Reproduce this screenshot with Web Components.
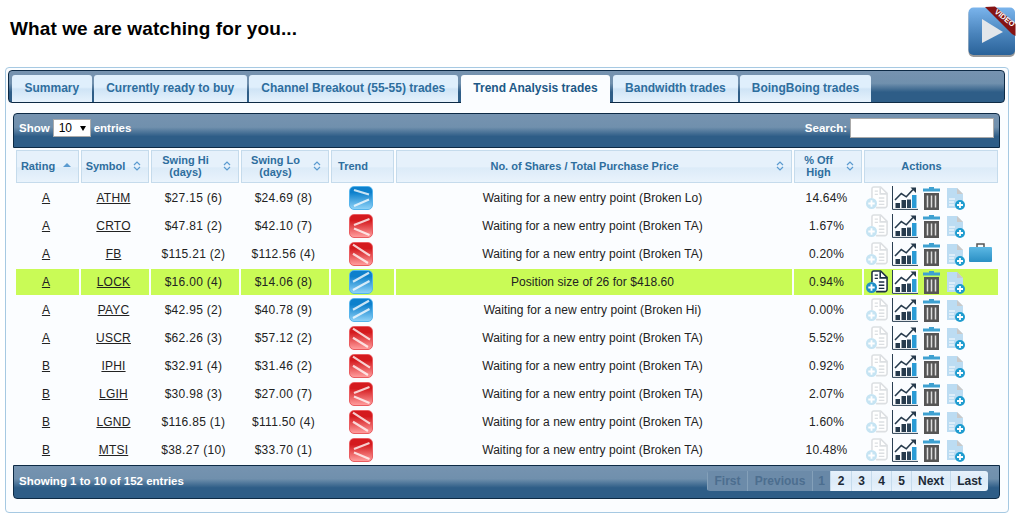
<!DOCTYPE html>
<html>
<head>
<meta charset="utf-8">
<title>What we are watching for you</title>
<style>
  html, body { margin: 0; padding: 0; background: #fff; }
  body { width: 1018px; height: 521px; overflow: hidden; font-family: "Liberation Sans", Arial, sans-serif; }
</style>
</head>
<body>
<watch-page></watch-page>

<script>
// small icons used in the action column
const ICONS = {
  doc: `<svg width="22" height="24" viewBox="0 0 24 26">
    <path d="M6.5 13V3a2 2 0 0 1 2-2h7.500l7 7v13a2.500 2.500 0 0 1-2.500 2.500H11" fill="#fff" stroke="var(--doc)" stroke-width="1.700"/>
    <path d="M15.500 1.500V8.500H23" fill="none" stroke="var(--doc)" stroke-width="1.700"/>
    <path d="M9.500 5.500h3.500M9.500 9h3.500M14 13h6M14 16.500h6M14 20h6" stroke="var(--doc)" stroke-width="1.500"/>
    <circle cx="6" cy="19" r="6" fill="var(--plus)"/>
    <path d="M6 15.500v7M2.500 19h7" stroke="#fff" stroke-width="2"/></svg>`,
  chart: `<svg width="26" height="24" viewBox="0 0 26 24">
    <path d="M0 0h26v24H0z" fill="var(--chartbg, none)"/>
    <path d="M.5 0v23.400H26" fill="none" stroke="#2a3f52" stroke-width="1"/>
    <path d="M3 14l6.300-6.500 5 3.300L21 3.500" fill="none" stroke="#263a4c" stroke-width="1.600"/>
    <path d="M18.500 1.500h5.500v5.500z" fill="#263a4c"/>
    <path d="M3.500 17h4.500v5H3.500zM9.500 14H14v8H9.500z" fill="#263a4c"/>
    <path d="M15 13.500h4v8.500h-4z" fill="#2c4459"/>
    <path d="M20 9h4.500v13H20z" fill="#2a9bd5"/></svg>`,
  trash: `<svg width="17" height="23" viewBox="0 0 17 23">
    <path d="M6 0h5v2H6z" fill="#3ea1d1"/>
    <path d="M0 1.500h17v3H0z" fill="#3ea1d1"/>
    <path d="M1 6h15v17H1z" fill="#555"/>
    <path d="M4.500 8.500v12M8.500 8.500v12M12.500 8.500v12" stroke="#dedede" stroke-width="1.500"/></svg>`,
  add: `<svg width="18" height="22" viewBox="0 0 18 22">
    <path d="M0 0h10l6 6v14H0z" fill="#bcdcf2"/>
    <path d="M10 0l6 6h-6z" fill="#c9c9c9"/>
    <path d="M2 11h6M2 14h5M2 17h5" stroke="#fff" stroke-width="1.200"/>
    <circle cx="13" cy="17" r="5" fill="#1f9ccf"/>
    <path d="M13 14v6M10 17h6" stroke="#fff" stroke-width="1.800"/></svg>`,
  case: `<svg width="23" height="19" viewBox="0 0 23 19">
    <defs><linearGradient id="cs" x1="0" y1="0" x2="0" y2="1"><stop offset="0" stop-color="#5cb8e4"/><stop offset="1" stop-color="#2a8fc4"/></linearGradient></defs>
    <path d="M8 4V1h7v3" fill="none" stroke="#555" stroke-width="1.500"/>
    <rect x="0" y="4" width="23" height="15" rx="1" fill="url(#cs)"/></svg>`
};

class ActionIcons extends HTMLElement {
  constructor() {
    super();
    const active = this.hasAttribute('active');
    const brief = this.hasAttribute('brief');
    this.attachShadow({ mode: 'open' }).innerHTML = `
    <style>
      :host { display: flex; align-items: flex-end; height: 100%; padding: 0 0 1px 2px; box-sizing: border-box;
        --doc: ${active ? '#1d3044' : '#dcdfe2'}; --plus: ${active ? '#1f8fc6' : '#c6e4f3'}; ${active ? '--chartbg:#fff;' : ''} }
      span { display: block; flex: none; }
      svg { display: block; }
      .d { margin-right: 4px; }
      .c { margin-right: 5px; }
      .t { margin-right: 7px; }
      .a { margin-right: 4px; }
      .b { margin-bottom: 4px; }
    </style>
    <span class="d">${ICONS.doc}</span><span class="c">${ICONS.chart}</span><span class="t">${ICONS.trash}</span><span class="a">${ICONS.add}</span>${brief ? `<span class="b">${ICONS.case}</span>` : ''}`;
  }
}
customElements.define('action-icons', ActionIcons);

class TrendIcon extends HTMLElement {
  constructor() {
    super();
    const kind = this.getAttribute('kind');
    const up = kind === 'up' || kind === 'wide';
    const lines = {
      wide: 'M5 4l15 4.500M5 20l15-6.500',
      up: 'M4 11.700L20 2.700M4 20l16.500-9',
      narrow: 'M20.500 5L5 11M5 14.500l15.500 6.500',
      down: 'M4 2.700l17 11M4 11.700l15 9.300'
    }[kind];
    const c = up ? ['#0d80cc', '#8ed2f7', '#55b4ec'] : ['#d41a1e', '#ff9d9d', '#ea5c60'];
    this.attachShadow({ mode: 'open' }).innerHTML = `
    <style>
      :host { display: block; width: 24px; height: 24px; border-radius: 5px; border: 1px solid ${c[2]};
        box-sizing: border-box; background: linear-gradient(${c[0]}, ${c[0]} 25%, ${c[1]}); }
      svg { display: block; margin: -1px; }
    </style>
    <svg width="24" height="24" viewBox="0 0 24 24"><path d="${lines}" fill="none" stroke="#fff" stroke-opacity=".78" stroke-width="2.200"/></svg>`;
  }
}
customElements.define('trend-icon', TrendIcon);

class HeadCell extends HTMLElement {
  constructor() {
    super();
    const sort = this.getAttribute('sort');
    let arrows = '';
    if (sort === 'asc') arrows = '<path d="M4 2l4 4H0z" fill="#5b9bd0"/>';
    if (sort === 'both') arrows = '<path d="M1 4l3-3 3 3M1 6l3 3 3-3" fill="none" stroke="#5b9bd0" stroke-width="1.200"/>';
    this.attachShadow({ mode: 'open' }).innerHTML = `
    <style>
      :host { display: flex; align-items: center; box-sizing: border-box; height: 33px; padding: 0 7px 2px 3px;
        border: 1px solid #c5dbec; background: linear-gradient(#e6f1fb 0, #e6f1fb 50%, #dcebf8 55%, #e9f3fc 100%);
        color: #2e6e9e; font: bold 11px/12px "Liberation Sans", Arial, sans-serif; }
      .t { flex: 1; text-align: center; white-space: nowrap; }
      svg { display: block; flex: none; margin-left: 7px; }
    </style>
    <div class="t"><slot></slot></div><svg width="8" height="10" viewBox="0 0 8 10">${arrows}</svg>`;
  }
}
customElements.define('head-cell', HeadCell);

class BlueBar extends HTMLElement {
  constructor() {
    super();
    this.attachShadow({ mode: 'open' }).innerHTML = `
    <style>
      :host { display: flex; align-items: center; justify-content: space-between; box-sizing: border-box;
        border: 1px solid #0d2a45; color: #fff; font: bold 11.5px "Liberation Sans", Arial, sans-serif;
        background: linear-gradient(#7693b0 0, #7090ad 40%, #2e5d87 68%, #2e5d87 100%); }
    </style>
    <slot></slot>`;
  }
}
customElements.define('blue-bar', BlueBar);

class TabStrip extends HTMLElement {
  constructor() {
    super();
    const tabs = ['Summary', 'Currently ready to buy', 'Channel Breakout (55-55) trades', 'Trend Analysis trades', 'Bandwidth trades', 'BoingBoing trades'];
    const on = 3;
    this.attachShadow({ mode: 'open' }).innerHTML = `
    <style>
      :host { display: block; }
      blue-bar { justify-content: flex-start; align-items: flex-start; height: 33px; margin: 2px 3px 0 2px; padding: 4px 0 0 3px; border-radius: 4px; }
      a { display: block; box-sizing: border-box; padding: 0 12.5px; margin-right: 2px; height: 27px; line-height: 26px;
        border-radius: 3px 3px 0 0; font-size: 12px; font-weight: bold; color: #2e6e9e;
        background: linear-gradient(#dfeffc 0, #dfeffc 45%, #cfe4f6 52%, #e6f2fc 100%); }
      a.on { height: 28px; margin: 0 3px -1px 1px; background: #fbfdff; color: #1d5987; }
      a.on ~ a { padding: 0 12px; }
    </style>
    <blue-bar>${tabs.map((t, i) => `<a class="${i === on ? 'on' : ''}">${t}</a>`).join('')}</blue-bar>`;
  }
}
customElements.define('tab-strip', TabStrip);

class PagerBar extends HTMLElement {
  constructor() {
    super();
    const btn = (t, w, cls) => `<b class="${cls || ''}" style="width:${w}px">${t}</b>`;
    this.attachShadow({ mode: 'open' }).innerHTML = `
    <style>
      :host { display: flex; height: 20px; border-radius: 3px; overflow: hidden; font: bold 12px/20px "Liberation Sans", Arial, sans-serif; }
      b { display: block; box-sizing: border-box; text-align: center; color: #1d2a36; background: linear-gradient(#e6f1fb, #dcebf8 50%, #e9f3fc); border-left: 1px solid #c5dbec; }
      b:first-child { border-left: 0; }
      b.off { background: #6c8ba9; color: #4c6e8f; border-left-color: #84a0b9; }
      b.cur { background: #6888a7; }
    </style>
    ${btn('First', 40, 'off')}${btn('Previous', 65, 'off')}${btn('1', 18, 'off cur')}${btn('2', 21)}${btn('3', 20)}${btn('4', 20)}${btn('5', 20)}${btn('Next', 39)}${btn('Last', 38)}`;
  }
}
customElements.define('pager-bar', PagerBar);

const DATA = [
  ['A', 'ATHM', '$27.15 (6)', '$24.69 (8)', 'wide', 'Waiting for a new entry point (Broken Lo)', '14.64%'],
  ['A', 'CRTO', '$47.81 (2)', '$42.10 (7)', 'narrow', 'Waiting for a new entry point (Broken TA)', '1.67%'],
  ['A', 'FB', '$115.21 (2)', '$112.56 (4)', 'down', 'Waiting for a new entry point (Broken TA)', '0.20%', 'brief'],
  ['A', 'LOCK', '$16.00 (4)', '$14.06 (8)', 'up', 'Position size of 26 for $418.60', '0.94%', 'active'],
  ['A', 'PAYC', '$42.95 (2)', '$40.78 (9)', 'up', 'Waiting for a new entry point (Broken Hi)', '0.00%'],
  ['A', 'USCR', '$62.26 (3)', '$57.12 (2)', 'down', 'Waiting for a new entry point (Broken TA)', '5.52%'],
  ['B', 'IPHI', '$32.91 (4)', '$31.46 (2)', 'down', 'Waiting for a new entry point (Broken TA)', '0.92%'],
  ['B', 'LGIH', '$30.98 (3)', '$27.00 (7)', 'narrow', 'Waiting for a new entry point (Broken TA)', '2.07%'],
  ['B', 'LGND', '$116.85 (1)', '$111.50 (4)', 'down', 'Waiting for a new entry point (Broken TA)', '1.60%'],
  ['B', 'MTSI', '$38.27 (10)', '$33.70 (1)', 'narrow', 'Waiting for a new entry point (Broken TA)', '10.48%']
];

class StockTable extends HTMLElement {
  constructor() {
    super();
    const rows = DATA.map(r => {
      const cls = r[7] === 'active' ? 'row hi' : 'row';
      return `<div class="${cls}">
        <div><u>${r[0]}</u></div><div><u>${r[1]}</u></div><div class="num">${r[2]}</div><div class="num">${r[3]}</div>
        <div><trend-icon kind="${r[4]}"></trend-icon></div><div class="msg">${r[5]}</div><div>${r[6]}</div>
        <div class="act"><action-icons ${r[7] || ''}></action-icons></div></div>`;
    }).join('');
    this.attachShadow({ mode: 'open' }).innerHTML = `
    <style>
      :host { display: block; margin-left: 10px; }
      .head, .row { display: grid; grid-template-columns: 63px 68px 88px 88px 63px 396px 68px 134px; column-gap: 2px; }
      .head { margin-top: 2px; margin-bottom: 1px; }
      .row { height: 28px; font: 12px "Liberation Sans", Arial, sans-serif; color: #222; letter-spacing: .2px; }
      .row > div { display: flex; align-items: center; justify-content: center; box-sizing: border-box; height: 26px; margin: 1px 0; padding-right: 3px; }
      .row > .num { letter-spacing: .3px; }
      .row > .msg { letter-spacing: .05px; }
      .row > .act { display: block; padding: 0; }
      .row.hi > div { background: #c9fb56; }
      u { text-decoration: underline; }
    </style>
    <div class="head">
      <head-cell sort="asc">Rating</head-cell>
      <head-cell sort="both">Symbol</head-cell>
      <head-cell sort="both">Swing Hi<br>(days)</head-cell>
      <head-cell sort="both">Swing Lo<br>(days)</head-cell>
      <head-cell>Trend</head-cell>
      <head-cell sort="both">No. of Shares / Total Purchase Price</head-cell>
      <head-cell sort="both">% Off<br>High</head-cell>
      <head-cell>Actions</head-cell>
    </div>
    ${rows}`;
  }
}
customElements.define('stock-table', StockTable);

class WatchPage extends HTMLElement {
  constructor() {
    super();
    this.attachShadow({ mode: 'open' }).innerHTML = `
    <style>
      :host { display: block; font-family: "Liberation Sans", Arial, sans-serif; }
      header { display: flex; justify-content: space-between; align-items: flex-start; height: 67px; padding: 0 0 0 10px; }
      h1 { margin: 18px 0 0; font-size: 19px; line-height: 22px; font-weight: bold; letter-spacing: .1px; color: #000; }
      .video { margin: 6px 2px 0 0; display: block; }
      .panel { box-sizing: border-box; width: 1004px; height: 446px; margin-left: 5px; border: 1px solid #a6c9e2; border-radius: 4px; background: #fbfdff; }
      .top { height: 35px; margin: 10px 8px 0 7px; padding: 5px 5px 0 5px; align-items: flex-start; border-radius: 4px 4px 0 0; }
      .top span { display: flex; align-items: center; height: 18px; }
      .sel { display: inline-flex; align-items: center; justify-content: space-between; box-sizing: border-box; width: 38px; height: 18px; margin: 0 3px; padding: 0 4px 0 5px;
        background: #fff; border: 1px solid #aaa; color: #000; font-weight: normal; font-size: 12px; }
      .sel i { width: 0; height: 0; border: 3.5px solid transparent; border-top: 5px solid #000; border-bottom: 0; }
      .search { box-sizing: border-box; width: 144px; height: 20px !important; margin-left: 3px; background: #fff; border: 1px solid #aaa; }
      .bottom { height: 34px; margin: 1px 8px 0 7px; padding: 0 11px 2px 5px; border-radius: 0 0 4px 4px; }
    </style>
    <header>
      <h1>What we are watching for you...</h1>
      <svg class="video" width="48" height="52" viewBox="0 0 48 52">
        <defs><linearGradient id="v" x1="0" y1="0" x2="0" y2="1"><stop offset="0" stop-color="#7ab4ec"/><stop offset=".55" stop-color="#4a84bc"/><stop offset="1" stop-color="#2a6299"/></linearGradient></defs>
        <rect x=".5" y="3" width="46.500" height="48" rx="5" fill="#333" opacity=".5"/>
        <rect x=".5" y="1.500" width="46.500" height="47.500" rx="5" fill="url(#v)"/>
        <path d="M14 13l21 13-21 11z" fill="#e3e6ea"/>
        <path d="M17 1L27 .5 47.500 18V30L44 28z" fill="#851313"/>
        <text x="0" y="0" text-anchor="middle" transform="translate(35.200 13.900) rotate(38)" fill="#fff" font-family="Liberation Sans, Arial, sans-serif" font-size="7.500" font-weight="bold">VIDEO</text>
      </svg>
    </header>
    <div class="panel">
      <tab-strip></tab-strip>
      <blue-bar class="top">
        <span>Show<span class="sel">10<i></i></span>entries</span>
        <span>Search:<span class="search"></span></span>
      </blue-bar>
      <stock-table></stock-table>
      <blue-bar class="bottom">
        <span>Showing 1 to 10 of 152 entries</span>
        <pager-bar></pager-bar>
      </blue-bar>
    </div>`;
  }
}
customElements.define('watch-page', WatchPage);
</script>
</body>
</html>
